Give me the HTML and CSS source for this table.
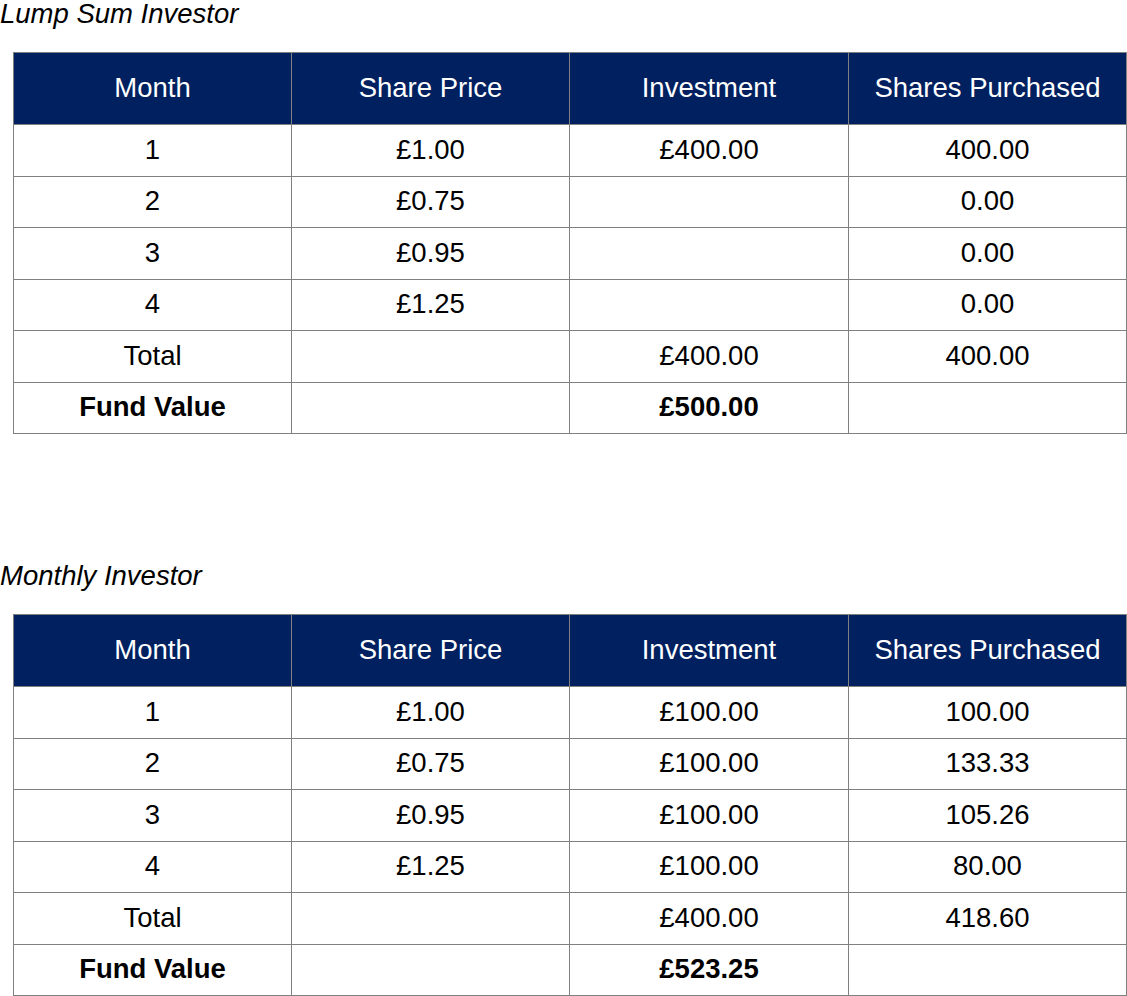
FILE: index.html
```html
<!DOCTYPE html>
<html lang="en">
<head>
<meta charset="utf-8">
<title>Investor Tables</title>
<link rel="stylesheet" href="styles.css">
</head>
<body>
<section class="block">
  <h2 class="title">Lump Sum Investor</h2>
  <table class="grid">
    <colgroup><col class="c-a"><col class="c-a"><col class="c-b"><col class="c-a"></colgroup>
    <thead>
      <tr><th>Month</th><th>Share Price</th><th>Investment</th><th>Shares Purchased</th></tr>
    </thead>
    <tbody>
      <tr><td>1</td><td>£1.00</td><td>£400.00</td><td>400.00</td></tr>
      <tr><td>2</td><td>£0.75</td><td></td><td>0.00</td></tr>
      <tr><td>3</td><td>£0.95</td><td></td><td>0.00</td></tr>
      <tr><td>4</td><td>£1.25</td><td></td><td>0.00</td></tr>
      <tr><td>Total</td><td></td><td>£400.00</td><td>400.00</td></tr>
      <tr class="strong"><td>Fund Value</td><td></td><td>£500.00</td><td></td></tr>
    </tbody>
  </table>
</section>
<section class="block second">
  <h2 class="title">Monthly Investor</h2>
  <table class="grid">
    <colgroup><col class="c-a"><col class="c-a"><col class="c-b"><col class="c-a"></colgroup>
    <thead>
      <tr><th>Month</th><th>Share Price</th><th>Investment</th><th>Shares Purchased</th></tr>
    </thead>
    <tbody>
      <tr><td>1</td><td>£1.00</td><td>£100.00</td><td>100.00</td></tr>
      <tr><td>2</td><td>£0.75</td><td>£100.00</td><td>133.33</td></tr>
      <tr><td>3</td><td>£0.95</td><td>£100.00</td><td>105.26</td></tr>
      <tr><td>4</td><td>£1.25</td><td>£100.00</td><td>80.00</td></tr>
      <tr><td>Total</td><td></td><td>£400.00</td><td>418.60</td></tr>
      <tr class="strong"><td>Fund Value</td><td></td><td>£523.25</td><td></td></tr>
    </tbody>
  </table>
</section>
</body>
</html>
```
FILE: styles.css
```css
html, body {
  margin: 0;
  padding: 0;
  background: #ffffff;
}
body {
  font-family: "Liberation Sans", Arial, sans-serif;
  font-size: 27.5px;
  color: #000000;
}
.block {
  display: block;
}
.second {
  margin-top: 128px;
}
.title {
  margin: 0 0 25px 0;
  font-size: 27.5px;
  line-height: 27px;
  font-style: italic;
  font-weight: normal;
}
.grid {
  border-collapse: collapse;
  margin-left: 13px;
  width: 1114px;
  table-layout: fixed;
}
.c-a {
  width: 278px;
}
.c-b {
  width: 279px;
}
.grid th,
.grid td {
  border: 1px solid #808080;
  padding: 0 0 2px 0;
  text-align: center;
  vertical-align: middle;
  font-size: 27.5px;
  line-height: 31px;
}
.grid th {
  background: #002060;
  color: #ffffff;
  font-weight: normal;
  height: 69px;
}
.grid td {
  height: 48.5px;
}
.strong td {
  font-weight: bold;
}
```
